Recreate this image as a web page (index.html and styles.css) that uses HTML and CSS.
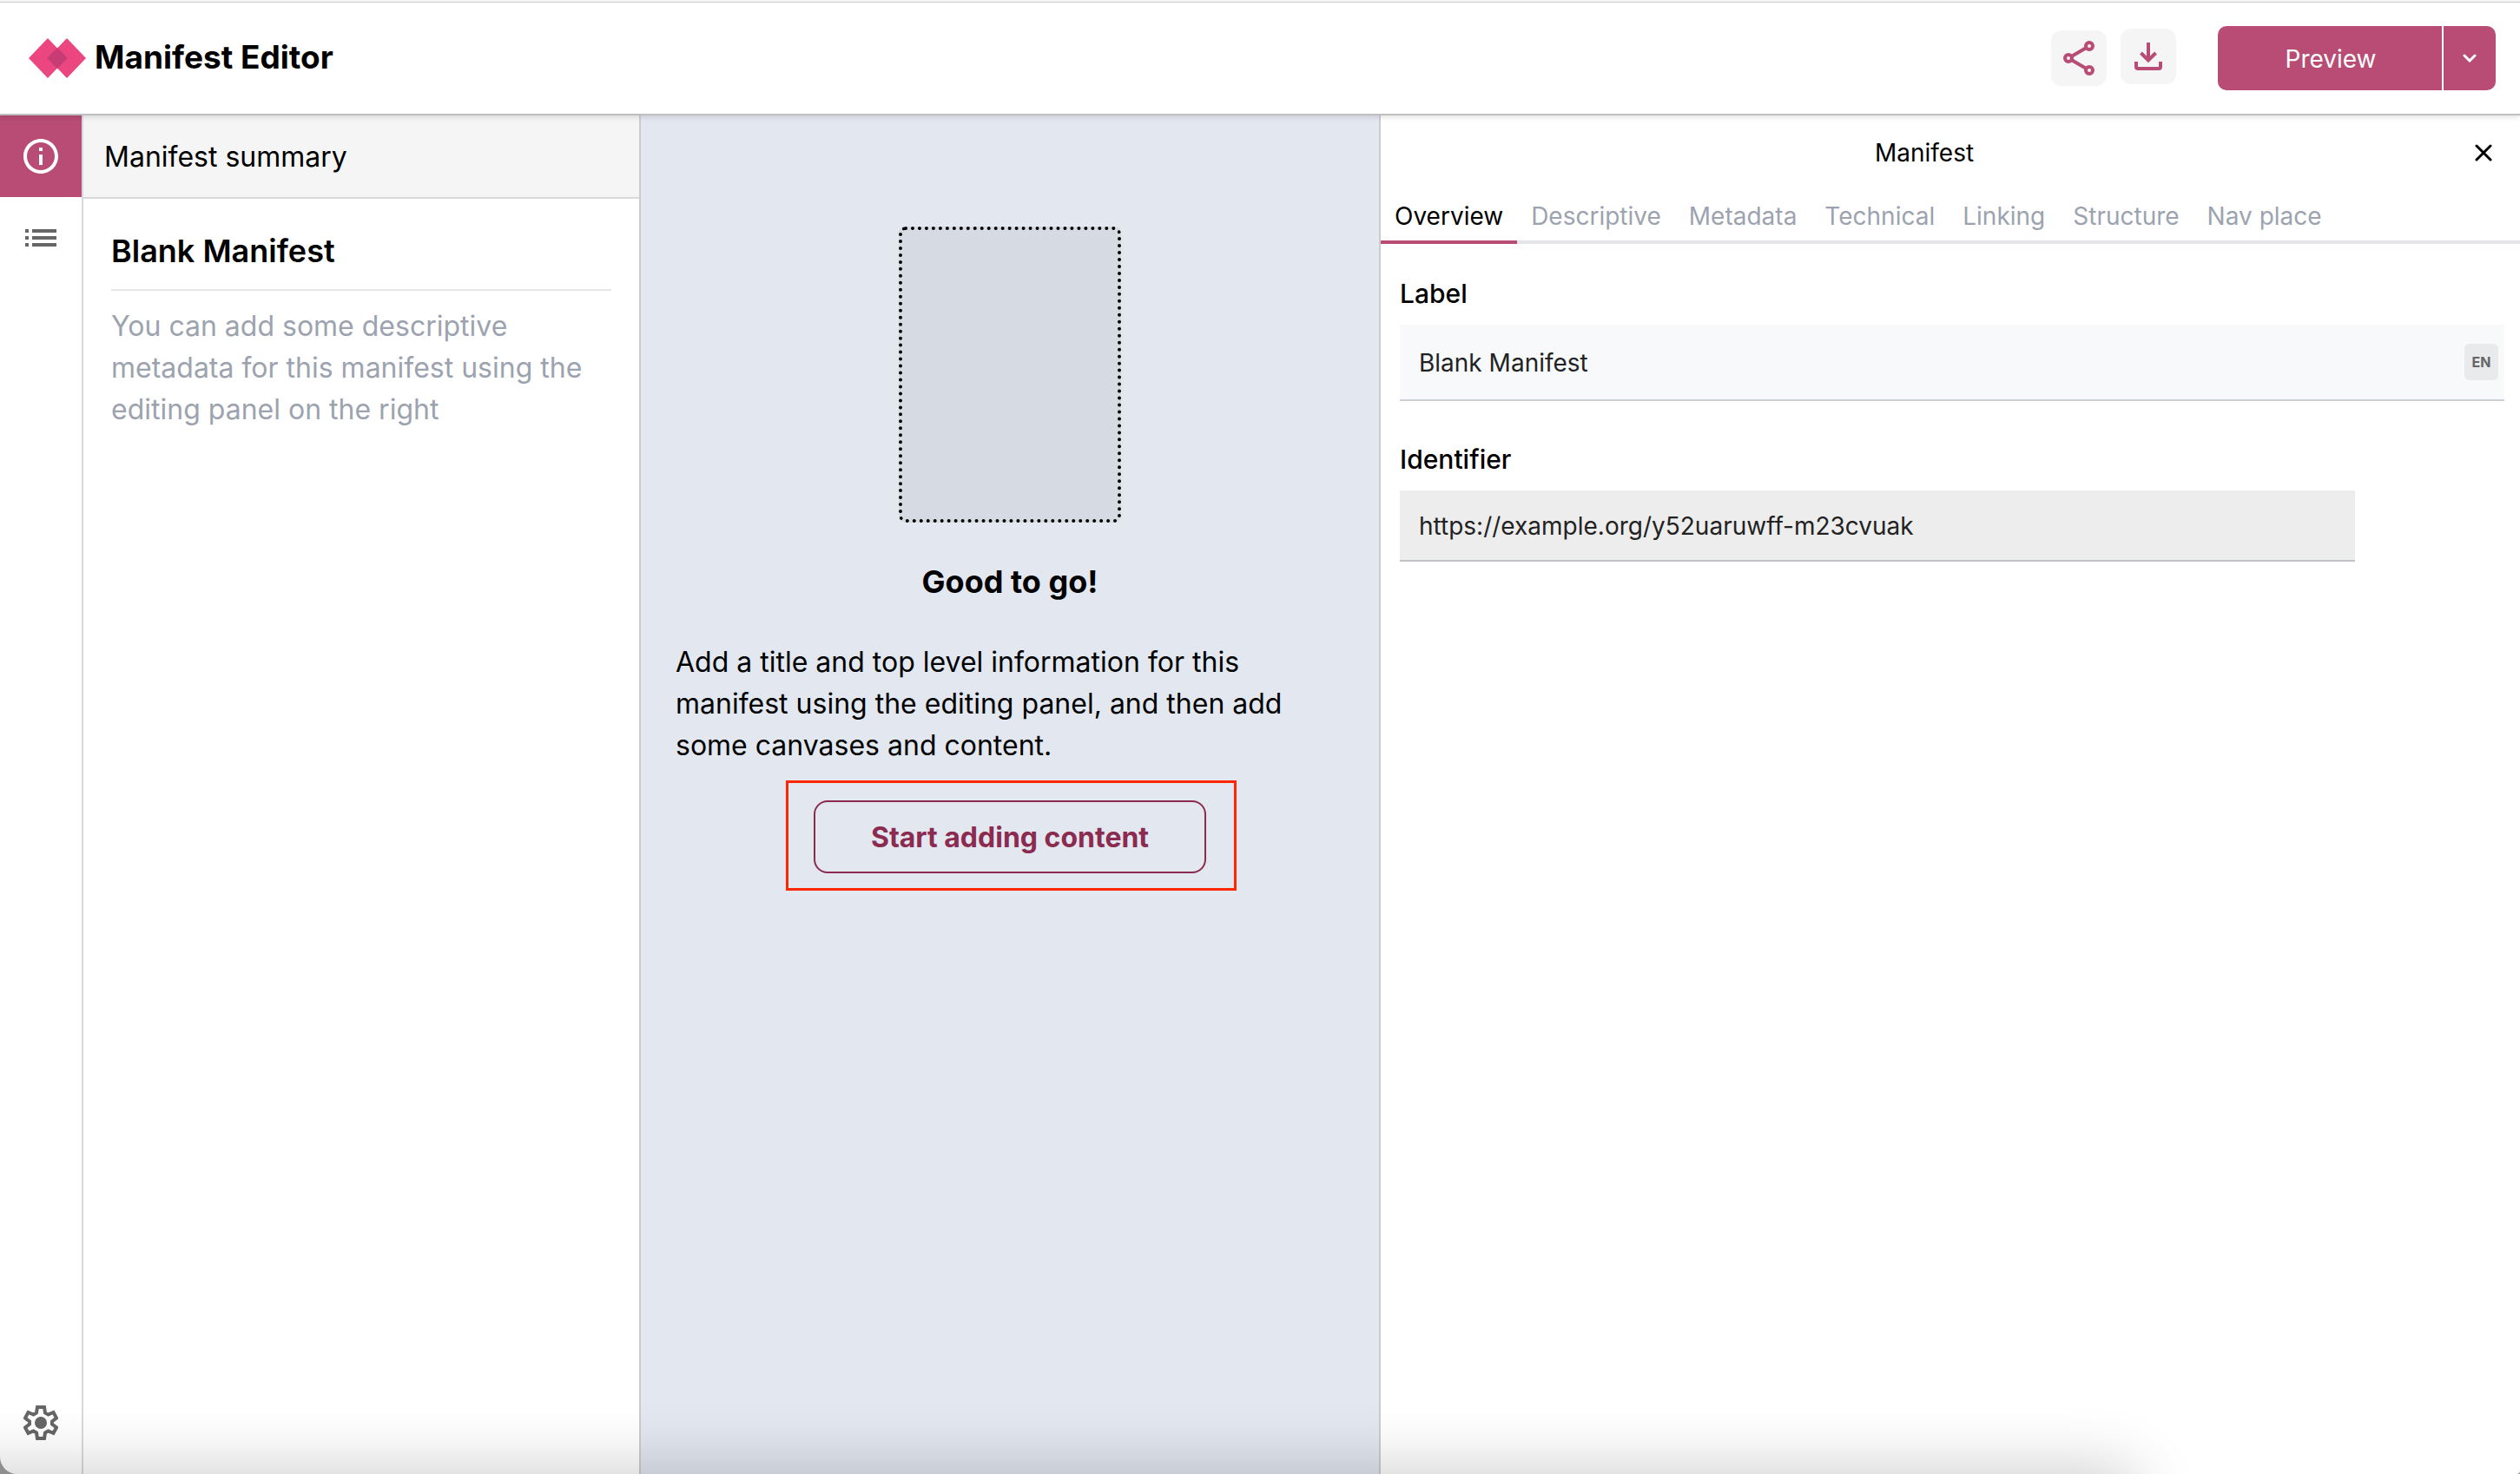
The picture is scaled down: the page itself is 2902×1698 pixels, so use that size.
FILE: index.html
```html
<!DOCTYPE html>
<html lang="en">
<head>
<meta charset="utf-8">
<title>Manifest Editor</title>
<link rel="stylesheet" href="styles.css">
</head>
<body>
<div class="app">
  <header class="topbar">
    <a class="brand" href="#">
      <svg class="brand-mark" viewBox="0 0 66 46" aria-hidden="true">
        <path d="M0 23 22 0 44 23 22 46Z" fill="#eb467f"/>
        <path d="M22 23 44 0 66 23 44 46Z" fill="#eb467f"/>
        <path d="M21 23 33 11 45 23 33 35Z" fill="#c73c75"/>
      </svg>
      <span class="brand-name">Manifest Editor</span>
    </a>
    <div class="actions">
      <button class="icon-button" type="button" aria-label="Share">
        <svg viewBox="0 0 64 64" fill="none" stroke="currentColor" stroke-width="4">
          <path d="M20 32 44 18M20 32 44 46"/>
          <g fill="#f5f5f5"><circle cx="20" cy="32" r="4"/><circle cx="44" cy="18" r="4"/><circle cx="44" cy="46" r="4"/></g>
        </svg>
      </button>
      <button class="icon-button icon-button-raised" type="button" aria-label="Download">
        <svg viewBox="0 0 64 64" fill="none" stroke="currentColor" stroke-width="4">
          <path d="M32 16V36M23.500 28 32 36.500 40.500 28M18 38V44Q18 46 20 46H44Q46 46 46 44V38"/>
        </svg>
      </button>
      <div class="split">
        <button class="preview" type="button">Preview</button>
        <button class="preview-more" type="button" aria-label="More preview options">
          <svg viewBox="0 0 16 10" fill="none" stroke="currentColor" stroke-width="3" stroke-linecap="round"><path d="M2 2 8 8 14 2"/></svg>
        </button>
      </div>
    </div>
  </header>
  <div class="workspace">
    <nav class="rail" aria-label="Panels">
      <button class="rail-button rail-active" type="button" aria-label="Manifest summary">
        <svg viewBox="0 0 24 24" fill="currentColor"><path d="M11 7h2v2h-2zm0 4h2v6h-2zm1-9C6.480 2 2 6.480 2 12s4.480 10 10 10 10-4.480 10-10S17.520 2 12 2zm0 18c-4.410 0-8-3.590-8-8s3.590-8 8-8 8 3.590 8 8-3.590 8-8 8z"/></svg>
      </button>
      <button class="rail-button" type="button" aria-label="Canvas list">
        <svg viewBox="0 0 24 24" fill="currentColor"><path d="M3 13h2v-2H3zm0 4h2v-2H3zm0-8h2V7H3zm4 4h14v-2H7zm0 4h14v-2H7zM7 7v2h14V7z"/></svg>
      </button>
      <button class="rail-button rail-last" type="button" aria-label="Settings">
        <svg viewBox="0 0 40 40"><path d="M16 2H24L25 8.500 28.500 10.500 34.500 8 38 14.500 33 18.500V21.500L38 25.500 34.500 32 28.500 29.500 25 31.500 24 38H16L15 31.500 11.500 29.500 5.500 32 2 25.500 7 21.500V18.500L2 14.500 5.500 8 11.500 10.500 15 8.500Z" fill="none" stroke="currentColor" stroke-width="4"/><circle cx="20" cy="20" r="7" fill="currentColor"/></svg>
      </button>
    </nav>
    <section class="summary">
      <h2 class="summary-title">Manifest summary</h2>
      <div class="summary-body">
        <h3 class="manifest-name">Blank Manifest</h3>
        <p class="manifest-hint">You can add some descriptive metadata for this manifest using the editing panel on the right</p>
      </div>
    </section>
    <main class="stage">
      <div class="placeholder"></div>
      <h1 class="stage-title">Good to go!</h1>
      <p class="stage-text">Add a title and top level information for this manifest using the editing panel, and then add some canvases and content.</p>
      <div class="highlight"><button class="start" type="button">Start adding content</button></div>
    </main>
    <aside class="editor">
      <div class="editor-head">
        <h2 class="editor-title">Manifest</h2>
        <button class="close" type="button" aria-label="Close">
          <svg viewBox="0 0 20 20" fill="none" stroke="currentColor" stroke-width="3" stroke-linecap="round"><path d="M2 2 18 18M18 2 2 18"/></svg>
        </button>
      </div>
      <div class="tabs" role="tablist">
        <button class="tab tab-active" type="button" role="tab" aria-selected="true">Overview</button>
        <button class="tab" type="button" role="tab">Descriptive</button>
        <button class="tab" type="button" role="tab">Metadata</button>
        <button class="tab" type="button" role="tab">Technical</button>
        <button class="tab" type="button" role="tab">Linking</button>
        <button class="tab" type="button" role="tab">Structure</button>
        <button class="tab" type="button" role="tab">Nav place</button>
      </div>
      <form class="fields">
        <label class="field-label" for="label">Label</label>
        <div class="label-field">
          <input class="input" id="label" type="text" value="Blank Manifest">
          <button class="lang" type="button">EN</button>
        </div>
        <label class="field-label" for="identifier">Identifier</label>
        <input class="input input-readonly" id="identifier" type="text" value="https://example.org/y52uaruwff-m23cvuak" readonly>
      </form>
    </aside>
  </div>
  <div class="dock-shadow"></div>
</div>
</body>
</html>
```
FILE: styles.css
```css
* { box-sizing: border-box; }
body { margin: 0; background: #8f8f8f; color: #000; font-family: Inter, "Liberation Sans", sans-serif; font-size: 28px; }
h1, h2, h3, p { margin: 0; }
button { margin: 0; padding: 0; border: 0; background: none; color: inherit; font: inherit; }
svg { display: block; }

.app { position: relative; display: flex; flex-direction: column; min-height: 100vh; overflow: hidden; background: #fff; border-top: 2px solid #f6f6f6; border-radius: 0 0 4px 20px; }
.topbar { position: relative; display: flex; align-items: center; justify-content: space-between; height: 131px; padding: 0 28px 0 33px; background: #fff; border-top: 1px solid #ccc; border-bottom: 2px solid #bfbfbf; box-shadow: 0 2px 6px rgba(0, 0, 0, .12); }
.brand { display: flex; align-items: center; gap: 10px; color: #000; text-decoration: none; }
.brand-mark { width: 66px; height: 46px; }
.brand-name { padding-bottom: 2px; font-size: 37px; line-height: 48px; font-weight: 700; }
.actions { display: flex; align-items: center; gap: 16px; }
.icon-button { width: 64px; height: 64px; border-radius: 12px; background: #f5f5f5; color: #b84c74; }
.icon-button-raised { margin-bottom: 4px; }
.split { display: flex; gap: 2px; margin-left: 32px; }
.preview, .preview-more { height: 74px; background: #b84c74; color: #fff; }
.preview { width: 258px; padding: 2px 0 0 2px; border-radius: 10px 0 0 10px; }
.preview-more { display: flex; align-items: center; justify-content: center; width: 60px; border-radius: 0 10px 10px 0; }
.preview-more svg { width: 16px; height: 10px; }

.workspace { flex: 1; display: grid; grid-template-columns: 96px 642px 852px 1fr; }
.rail { display: flex; flex-direction: column; border-right: 2px solid #d9d9d9; }
.rail-button { display: flex; align-items: center; justify-content: center; height: 94px; color: #666; }
.rail-button svg { width: 48px; height: 48px; }
.rail-active { background: #b84c74; color: #fff; }
.rail-last { margin-top: auto; margin-bottom: 12px; }
.rail-last svg { width: 40px; height: 40px; }

.summary { border-right: 2px solid #ccc; }
.summary-title { height: 96px; padding: 0 24px; background: #f5f5f5; border-bottom: 2px solid #d9d9d9; font-size: 32px; line-height: 96px; font-weight: 400; }
.summary-body { padding: 32px; }
.manifest-name { padding-bottom: 16px; border-bottom: 2px solid #e5e7eb; font-size: 36px; line-height: 56px; font-weight: 600; }
.manifest-hint { padding-top: 17px; color: #9ca3af; font-size: 32px; line-height: 48px; }

.stage { display: flex; flex-direction: column; align-items: center; padding: 128px 40px 0; background: #e2e7f0; border-right: 2px solid #ccc; }
.placeholder { width: 256px; height: 341px; border: 4px dotted #000; border-radius: 8px; background: #d6dae3; }
.stage-title { margin-top: 40px; font-size: 36px; line-height: 56px; font-weight: 700; }
.stage-text { align-self: stretch; margin: 41px 0 39px; font-size: 32px; line-height: 48px; }
.highlight { position: relative; }
.highlight::after { content: ""; position: absolute; inset: -23px -35px -20px -32px; border: 3px solid #ff2600; pointer-events: none; }
.start { width: 452px; height: 84px; border: 2px solid #8b2b50; border-radius: 16px; color: #8b2b50; font-size: 32px; font-weight: 700; }

.editor-head { display: flex; align-items: center; height: 88px; padding: 0 32px 2px; }
.editor-title { flex: 1; padding-right: 40px; text-align: center; font-size: 28px; font-weight: 400; }
.close svg { width: 20px; height: 20px; }
.tabs { display: flex; border-bottom: 4px solid #e5e5e9; }
.tab { height: 60px; margin-bottom: -4px; padding: 0 16px; border-bottom: 4px solid transparent; color: #9ca3af; }
.tab-active { border-color: #b84c74; color: #000; }
.fields { display: flex; flex-direction: column; padding: 37px 18px 0 22px; }
.field-label { margin-bottom: 16px; font-size: 30px; line-height: 40px; font-weight: 500; }
.label-field { position: relative; margin-bottom: 47px; }
.input { width: 100%; height: 88px; padding: 1px 22px 0; border: 0; border-bottom: 2px solid #cbd0d8; background: #f8f9fb; color: #222; font: inherit; }
.input-readonly { max-width: 1100px; height: 82px; border-color: #bfc2c7; background: #ededed; }
.lang { position: absolute; top: 22px; right: 7px; width: 39px; height: 42px; border-radius: 6px; background: #e9eaec; color: #666; font-size: 16px; font-weight: 700; }

/* Soft shade rising from the lower edge of the window */
.dock-shadow { position: absolute; top: 100%; left: -200px; right: 450px; height: 100px; border-radius: 20px; box-shadow: 0 0 70px 10px rgba(0, 0, 0, .18); pointer-events: none; }
```
